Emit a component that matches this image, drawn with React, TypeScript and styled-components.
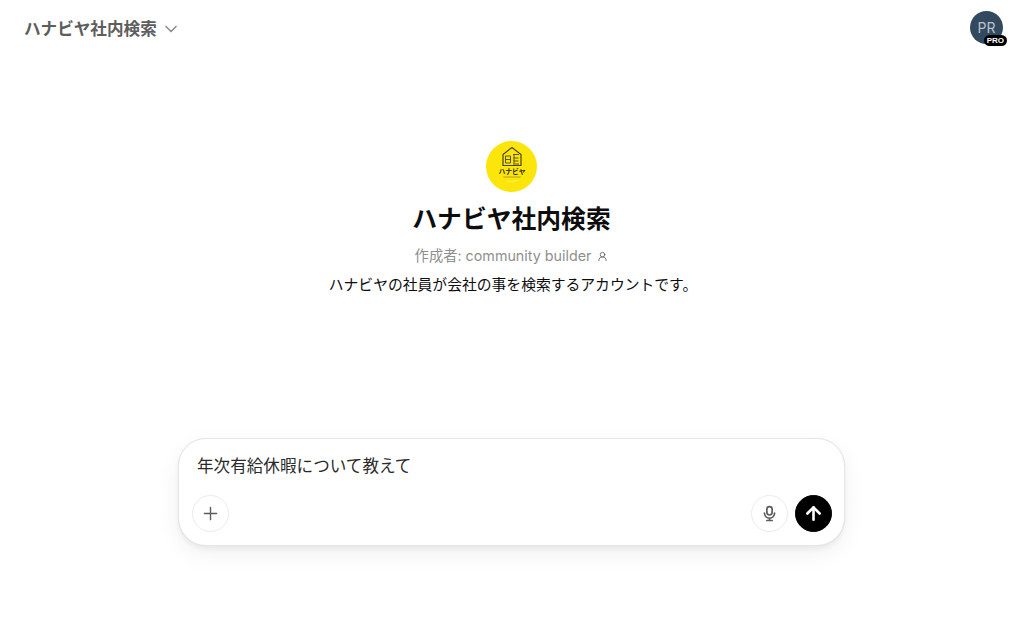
import React from "react";
import styled, { createGlobalStyle } from "styled-components";
import { ArrowUp, ChevronDown, Plus, UserRound } from "lucide-react";

const GlobalStyle = createGlobalStyle`
  html, body {
    margin: 0;
    padding: 0;
    background: #fff;
    font-family: Inter, "Liberation Sans", "Noto Sans CJK JP", sans-serif;
    color: #0d0d0d;
  }
`;

const Page = styled.div`
  width: 1024px;
  height: 633px;
  display: flex;
  flex-direction: column;
  overflow: hidden;
`;

const Header = styled.header`
  height: 57px;
  flex: none;
  box-sizing: border-box;
  display: flex;
  align-items: center;
  justify-content: space-between;
  padding: 0 21px 2px 24px;
`;

const ModelSwitcher = styled.div`
  display: flex;
  align-items: center;
  gap: 4px;
  font-size: 16.6px;
  font-weight: 600;
  color: #5d5d5d;
`;

const Chevron = styled(ChevronDown)`
  width: 20px;
  height: 20px;
  margin-top: 2px;
  color: #8f8f8f;
`;

const AvatarWrap = styled.div`
  position: relative;
  width: 33px;
  height: 33px;
`;

const AvatarCircle = styled.div`
  width: 33px;
  height: 33px;
  border-radius: 50%;
  background: #33495f;
  color: #b9c2cc;
  font-size: 14px;
  display: flex;
  align-items: center;
  justify-content: center;
`;

const ProBadge = styled.span`
  position: absolute;
  right: -4px;
  bottom: -2px;
  height: 11px;
  padding: 0 3px;
  border-radius: 6px;
  background: #000;
  color: #fff;
  font-size: 8px;
  font-weight: 700;
  line-height: 11px;
  font-family: "Liberation Sans", sans-serif;
`;

const Intro = styled.section`
  flex: none;
  height: 381px;
  padding: 84px 1px 0 0;
  box-sizing: border-box;
  display: flex;
  flex-direction: column;
  align-items: center;
`;

const Logo = styled.div`
  width: 51px;
  height: 51px;
  border-radius: 50%;
  background: #fbe50b;
`;

const Title = styled.h1`
  margin: 10px 0 0;
  font-size: 24.8px;
  line-height: 34px;
  font-weight: 600;
  color: #0d0d0d;
`;

const Author = styled.div`
  margin-top: 9px;
  display: flex;
  align-items: center;
  gap: 6px;
  font-size: 14.3px;
  line-height: 22px;
  color: #8f8f8f;
`;

const Description = styled.p`
  margin: 7px 0 0 3px;
  font-size: 14.8px;
  line-height: 22px;
  color: #0d0d0d;
`;

const Composer = styled.div`
  flex: none;
  width: 667px;
  height: 108px;
  margin-left: 178px;
  box-sizing: border-box;
  padding: 15px 12px 13px 13px;
  border: 1px solid #e6e6e6;
  border-radius: 28px;
  box-shadow: 0 4px 4px rgba(0, 0, 0, 0.04), 0 0 1px rgba(0, 0, 0, 0.1), 0 8px 24px rgba(0, 0, 0, 0.06);
  display: flex;
  flex-direction: column;
  justify-content: space-between;
  background: #fff;
`;

const Prompt = styled.div`
  padding-left: 5px;
  font-size: 16.6px;
  line-height: 24px;
  color: #2a2a2a;
`;

const Actions = styled.div`
  display: flex;
  align-items: center;
  gap: 7px;
`;

const Spacer = styled.div`
  flex: 1;
`;

const RoundButton = styled.button<{ $dark?: boolean }>`
  width: 37px;
  height: 37px;
  padding: 0;
  border-radius: 50%;
  display: flex;
  align-items: center;
  justify-content: center;
  border: 1px solid ${(p) => (p.$dark ? "#000" : "#ebebeb")};
  background: ${(p) => (p.$dark ? "#000" : "#fff")};
  color: ${(p) => (p.$dark ? "#fff" : "#5d5d5d")};
`;

const LogoMark = () => (
  <svg width="51" height="51" viewBox="0 0 51 51">
    <path d="M17 13.5 26 6.5 35 13.5V24.5H17Z" fill="none" stroke="#4a4520" strokeWidth="1.2" />
    <path d="M19.5 15h5v7h-5zM19.5 18.5h5M27 13.5h6M28 13.5v9M27.5 17h5M27.5 20h5M27 23h6" fill="none" stroke="#4a4520" strokeWidth="0.9" />
    <text x="26" y="32.5" textAnchor="middle" fontSize="6.8" fontWeight="700" fill="#2b2b10">ハナビヤ</text>
    <path d="M17.5 36h17" stroke="#a39a20" strokeWidth="0.9" />
    <path d="M21 41c3-1.5 4 1 6-.5s3-.5 5-.8" fill="none" stroke="#fff48a" strokeWidth="0.7" />
  </svg>
);

const MicIcon = () => (
  <svg width="17" height="17" viewBox="0 0 18 18" fill="none" stroke="currentColor" strokeWidth="1.8" strokeLinecap="round">
    <rect x="6.2" y="1.8" width="5.6" height="8.8" rx="2.8" />
    <path d="M3.6 8.6a5.4 5.4 0 0 0 10.8 0M9 14v2.4M6.2 16.4h5.6" />
  </svg>
);

export default function App() {
  return (
    <Page>
      <GlobalStyle />
      <Header>
        <ModelSwitcher>
          ハナビヤ社内検索
          <Chevron strokeWidth={2} />
        </ModelSwitcher>
        <AvatarWrap>
          <AvatarCircle>PR</AvatarCircle>
          <ProBadge>PRO</ProBadge>
        </AvatarWrap>
      </Header>
      <Intro>
        <Logo>
          <LogoMark />
        </Logo>
        <Title>ハナビヤ社内検索</Title>
        <Author>
          作成者: community builder
          <UserRound size={11} strokeWidth={1.8} color="#5d5d5d" />
        </Author>
        <Description>ハナビヤの社員が会社の事を検索するアカウントです。</Description>
      </Intro>
      <Composer>
        <Prompt>年次有給休暇について教えて</Prompt>
        <Actions>
          <RoundButton>
            <Plus size={21} strokeWidth={1.6} />
          </RoundButton>
          <Spacer />
          <RoundButton>
            <MicIcon />
          </RoundButton>
          <RoundButton $dark>
            <ArrowUp size={21} strokeWidth={3} />
          </RoundButton>
        </Actions>
      </Composer>
    </Page>
  );
}
